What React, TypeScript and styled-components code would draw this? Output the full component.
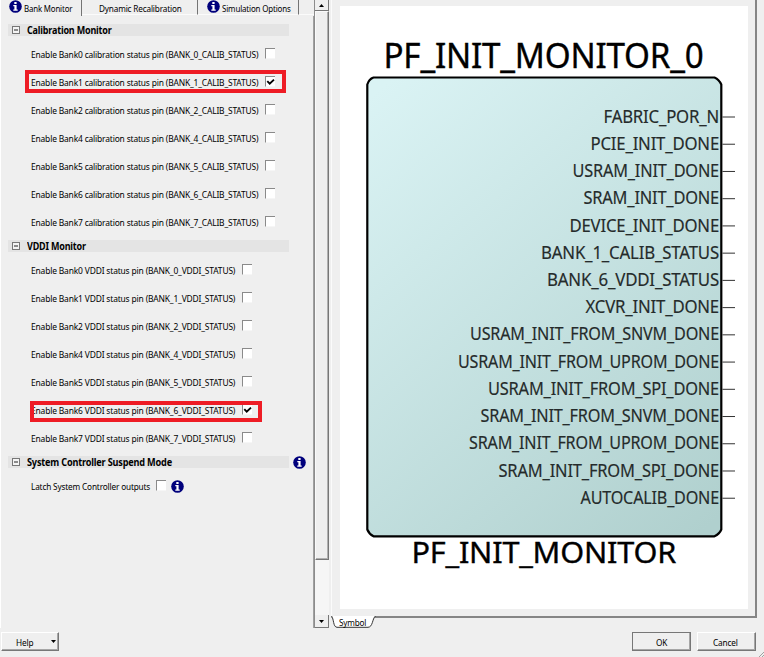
import React from "react";
import styled, { createGlobalStyle } from "styled-components";

const GlobalStyle = createGlobalStyle`
  * { box-sizing: border-box; }
  body { margin: 0; background: #efefef; overflow: hidden; }
`;

const Window = styled.div`
  width: 764px;
  height: 657px;
  display: flex;
  flex-direction: column;
  background: #efefef;
  color: #000;
  font: 9.8px/14px "Noto Sans", sans-serif;
  letter-spacing: -0.2px;
  white-space: nowrap;

  svg { flex: none; }
`;

/* Condensed label: occupies $w pixels, glyphs narrowed by $scale. */
const Label = styled.span<{ $w: number; $scale: number }>`
  flex: none;
  width: ${(p) => p.$w}px;
  transform: scaleX(${(p) => p.$scale * 0.967});
  transform-origin: 0 50%;
`;

const Panes = styled.div`
  display: flex;
  height: 629px;
`;

const LeftPane = styled.div`
  width: 314px;
  height: 628px;
  display: flex;
  flex-direction: column;
  border-left: 1px solid #fff;
`;

const TabBar = styled.div`
  display: flex;
  height: 16px;
`;

const Tab = styled.div<{ $width: number; $pad: number; $active?: boolean }>`
  width: ${(p) => p.$width}px;
  height: ${(p) => (p.$active ? 16 : 15)}px;
  padding-left: ${(p) => p.$pad}px;
  display: flex;
  align-items: center;
  gap: 2px;
  border-right: 1px solid #747474;
  border-bottom: ${(p) => (p.$active ? "none" : "1px solid #fbfbfb")};

  svg { margin-top: ${(p) => (p.$active ? -3 : -1)}px; }
  span { margin-top: ${(p) => (p.$active ? 1 : 4)}px; }
`;

const TabFiller = styled.div`
  flex: 1;
  height: 15px;
  border-bottom: 1px solid #fbfbfb;
`;

const Options = styled.div`
  flex: 1;
  padding-top: 4px;
  border-right: 1px solid #a0a0a0;
`;

const HeaderSlot = styled.div`
  height: 20px;
  padding-left: 7px;
  display: flex;
  align-items: center;
  gap: 4px;
`;

const HeaderBar = styled.div`
  width: 281px;
  height: 12px;
  padding-left: 4px;
  display: flex;
  align-items: center;
  gap: 7px;
  background: #e4e4e4;
  font-weight: 700;

  span { margin-top: 2px; }
`;

const Row = styled.div`
  position: relative;
  height: 28px;
  padding-left: 30px;
  display: flex;
  align-items: center;

  > span:first-child { margin-top: 2px; }
`;

const Check = styled.span`
  flex: none;
  width: 10px;
  height: 11px;
  margin-top: -2px;
  display: flex;
  background: #fff;
  border-top: 1px solid #8a8a8a;
  border-left: 1px solid #8a8a8a;
  border-bottom: 1px solid #f6f6f6;
`;

const Highlight = styled.div<{ $x: number; $y: number; $w: number; $h: number }>`
  position: absolute;
  left: ${(p) => p.$x}px;
  top: ${(p) => p.$y}px;
  width: ${(p) => p.$w}px;
  height: ${(p) => p.$h}px;
  border: 4px solid #ee1c25;
`;

const InfoWrap = styled.div`
  display: flex;
  margin-left: 5px;
`;

const ScrollBar = styled.div`
  width: 15px;
  height: 628px;
  display: flex;
  flex-direction: column;
  border-left: 1px solid #8c8c8c;
`;

const ScrollButton = styled.div<{ $h: number }>`
  height: ${(p) => p.$h}px;
  display: flex;
  align-items: center;
  justify-content: center;
  background: #efefef;
  border-right: 1px solid #777;
  border-bottom: 1px solid #777;
`;

const Thumb = styled.div`
  height: 549px;
  border: 1px solid #fafafa;
  border-right-color: #777;
  border-bottom-color: #777;
  box-shadow: inset -1px -1px #b0b0b0;
`;

const Trough = styled.div`
  flex: 1;
  background: #f6f6f6;
`;

const RightPane = styled.div`
  margin-left: 2px;
  display: flex;
  flex-direction: column;
`;

const Frame = styled.div`
  width: 426px;
  height: 618px;
  padding: 6px 0 0 8px;
  border-left: 1px solid #fbfbfb;
  border-right: 2px solid #858585;
  border-bottom: 2px solid #858585;
`;

const Canvas = styled.div`
  width: 408px;
  height: 603px;
  background: #fff;
`;

const SymbolTab = styled.div`
  position: relative;
  width: 45px;
  height: 12px;
  margin-top: -2px;
  padding: 1px 0 0 8px;
  display: flex;
  line-height: 12px;

  svg { position: absolute; left: 0; top: 0; }
`;

const Footer = styled.div`
  flex: 1;
  padding: 3px 8px 0 1px;
  display: flex;
  align-items: flex-start;
`;

const Button = styled.button<{ $w: number; $pad: number; $default?: boolean }>`
  width: ${(p) => p.$w}px;
  height: 19px;
  margin-left: ${(p) => (p.$w === 58 ? 0 : 6)}px;
  padding: 2px 0 0 ${(p) => p.$pad}px;
  display: flex;
  align-items: center;
  background: #efefef;
  color: #000;
  font: inherit;
  letter-spacing: inherit;
  text-align: left;
  border: 1px solid ${(p) => (p.$default ? "#777" : "#fff")};
  border-right-color: #777;
  border-bottom-color: #777;
  box-shadow: inset -1px -1px #a6a6a6;

  svg { margin: -3px 0 0 18px; }
`;

const Spacer = styled.div`
  flex: 1;
`;

const Grip = styled.svg`
  position: absolute;
  left: 758px;
  top: 651px;
`;

const InfoIcon = () => (
  <svg width="13" height="13" viewBox="0 0 13 13">
    <circle cx="6.5" cy="6.5" r="6.3" fill="#00007c" />
    <rect x="5.3" y="2" width="2.3" height="2" fill="#fff" />
    <path d="M4.3 5H7.6V9.5H8.7V10.7H4.3V9.5H5.4V6.2H4.3Z" fill="#fff" />
  </svg>
);

const CollapseIcon = () => (
  <svg width="8" height="8" viewBox="0 0 8 8">
    <rect x=".5" y=".5" width="7" height="7" fill="#f4f4f4" stroke="#777" />
    <path d="M2 4H6" stroke="#222" />
  </svg>
);

const Arrow = ({ up }: { up?: boolean }) => (
  <svg width="5" height="3" viewBox="0 0 5 3">
    <path d={up ? "M0 3L2.5 0L5 3Z" : "M0 0H5L2.5 3Z"} fill="#000" />
  </svg>
);

const Tick = () => (
  <svg width="9" height="10" viewBox="0 0 9 10">
    <path d="M1.3 4.2L3.7 6.6L8 2.6" fill="none" stroke="#000" strokeWidth="1.9" />
  </svg>
);

const banks = [0, 1, 2, 4, 5, 6, 7];

const pins: [string, number][] = [
  ["FABRIC_POR_N", 604],
  ["PCIE_INIT_DONE", 591],
  ["USRAM_INIT_DONE", 573],
  ["SRAM_INIT_DONE", 584],
  ["DEVICE_INIT_DONE", 570],
  ["BANK_1_CALIB_STATUS", 541.5],
  ["BANK_6_VDDI_STATUS", 547.5],
  ["XCVR_INIT_DONE", 586],
  ["USRAM_INIT_FROM_SNVM_DONE", 470.5],
  ["USRAM_INIT_FROM_UPROM_DONE", 458.5],
  ["USRAM_INIT_FROM_SPI_DONE", 488.5],
  ["SRAM_INIT_FROM_SNVM_DONE", 481],
  ["SRAM_INIT_FROM_UPROM_DONE", 469.5],
  ["SRAM_INIT_FROM_SPI_DONE", 499],
  ["AUTOCALIB_DONE", 581],
];

const BlockSymbol = () => (
  <svg width="408" height="603" viewBox="340 6 408 603" fontFamily="'Noto Sans', sans-serif">
    <defs>
      <linearGradient id="body" gradientUnits="userSpaceOnUse" x1="367" y1="100" x2="721" y2="515">
        <stop offset="0" stopColor="#daf3f4" />
        <stop offset="1" stopColor="#b0d0ce" />
      </linearGradient>
    </defs>
    <path
      d="M373.5 77.5H714.5Q719 79.5 721.3 84.5V529.5Q719.5 534 714.5 536.3H373.5Q369 534 367.3 529.5V84.5Q369 79 373.5 77.5Z"
      fill="url(#body)"
      stroke="#000"
      strokeWidth="2.2"
      strokeLinejoin="round"
    />
    <g stroke="#000" strokeWidth=".35">
      <text x="383.5" y="68" fontSize="34" textLength="320" lengthAdjust="spacingAndGlyphs">PF_INIT_MONITOR_0</text>
      <text x="411.5" y="563" fontSize="29.5" textLength="264.5" lengthAdjust="spacingAndGlyphs">PF_INIT_MONITOR</text>
    </g>
    {pins.map(([name, left], i) => (
      <g key={name}>
        <text
          x={left - 0.5}
          y={122.6 + i * 27.23}
          fontSize="17.3"
          fill="#252b2b"
          stroke="#252b2b"
          strokeWidth=".15"
          textLength={719.5 - left}
          lengthAdjust="spacingAndGlyphs"
        >
          {name}
        </text>
        <path d={`M722.4 ${117 + i * 27.23}H735`} stroke="#333" />
      </g>
    ))}
  </svg>
);

export default function App() {
  return (
    <>
      <GlobalStyle />
      <Window>
        <Panes>
          <LeftPane>
            <TabBar>
              <Tab $width={81} $pad={8} $active><InfoIcon /><Label $w={50} $scale={0.83}>Bank Monitor</Label></Tab>
              <Tab $width={116} $pad={17}><Label $w={84} $scale={0.865}>Dynamic Recalibration</Label></Tab>
              <Tab $width={101} $pad={9}><InfoIcon /><Label $w={70} $scale={0.84}>Simulation Options</Label></Tab>
              <TabFiller />
            </TabBar>
            <Options>
              <HeaderSlot>
                <HeaderBar><CollapseIcon /><Label $w={90} $scale={0.95}>Calibration Monitor</Label></HeaderBar>
              </HeaderSlot>
              {banks.map((n) => (
                <Row key={n}>
                  <Label $w={234} $scale={0.89}>Enable Bank{n} calibration status pin (BANK_{n}_CALIB_STATUS)</Label>
                  <Check>{n === 1 && <Tick />}</Check>
                  {n === 1 && <Highlight $x={24} $y={2} $w={261} $h={23} />}
                </Row>
              ))}
              <HeaderSlot>
                <HeaderBar><CollapseIcon /><Label $w={90} $scale={0.95}>VDDI Monitor</Label></HeaderBar>
              </HeaderSlot>
              {banks.map((n) => (
                <Row key={n}>
                  <Label $w={211} $scale={0.892}>Enable Bank{n} VDDI status pin (BANK_{n}_VDDI_STATUS)</Label>
                  <Check>{n === 6 && <Tick />}</Check>
                  {n === 6 && <Highlight $x={29} $y={5} $w={232} $h={21} />}
                </Row>
              ))}
              <HeaderSlot>
                <HeaderBar><CollapseIcon /><Label $w={150} $scale={0.965}>System Controller Suspend Mode</Label></HeaderBar>
                <InfoIcon />
              </HeaderSlot>
              <Row>
                <Label $w={125} $scale={0.87}>Latch System Controller outputs</Label>
                <Check />
                <InfoWrap><InfoIcon /></InfoWrap>
              </Row>
            </Options>
          </LeftPane>
          <ScrollBar>
            <ScrollButton $h={11}><Arrow up /></ScrollButton>
            <Thumb />
            <Trough />
            <ScrollButton $h={13}><Arrow /></ScrollButton>
          </ScrollBar>
          <RightPane>
            <Frame>
              <Canvas><BlockSymbol /></Canvas>
            </Frame>
            <SymbolTab>
              <svg width="45" height="12" viewBox="0 0 45 12">
                <path d="M0 0C3 3 2 11 6 11.3H37C42 11 41 3 44.5 0Z" fill="#fff" />
                <path d="M.5 0C3 3 2 11 6 11.3H37C42 11 41 3 44.5 0" fill="none" stroke="#333" />
              </svg>
              <Label $w={28} $scale={0.86}>Symbol</Label>
            </SymbolTab>
          </RightPane>
        </Panes>
        <Footer>
          <Button $w={58} $pad={14}><Label $w={17} $scale={0.87}>Help</Label><Arrow /></Button>
          <Spacer />
          <Button $w={59} $pad={23} $default><Label $w={13} $scale={0.87}>OK</Label></Button>
          <Button $w={59} $pad={15}><Label $w={28} $scale={0.87}>Cancel</Label></Button>
        </Footer>
        <Grip width="6" height="6" viewBox="0 0 6 6">
          <path d="M1 6L6 1M4 6L6 4" stroke="#a0a0a0" />
        </Grip>
      </Window>
    </>
  );
}
